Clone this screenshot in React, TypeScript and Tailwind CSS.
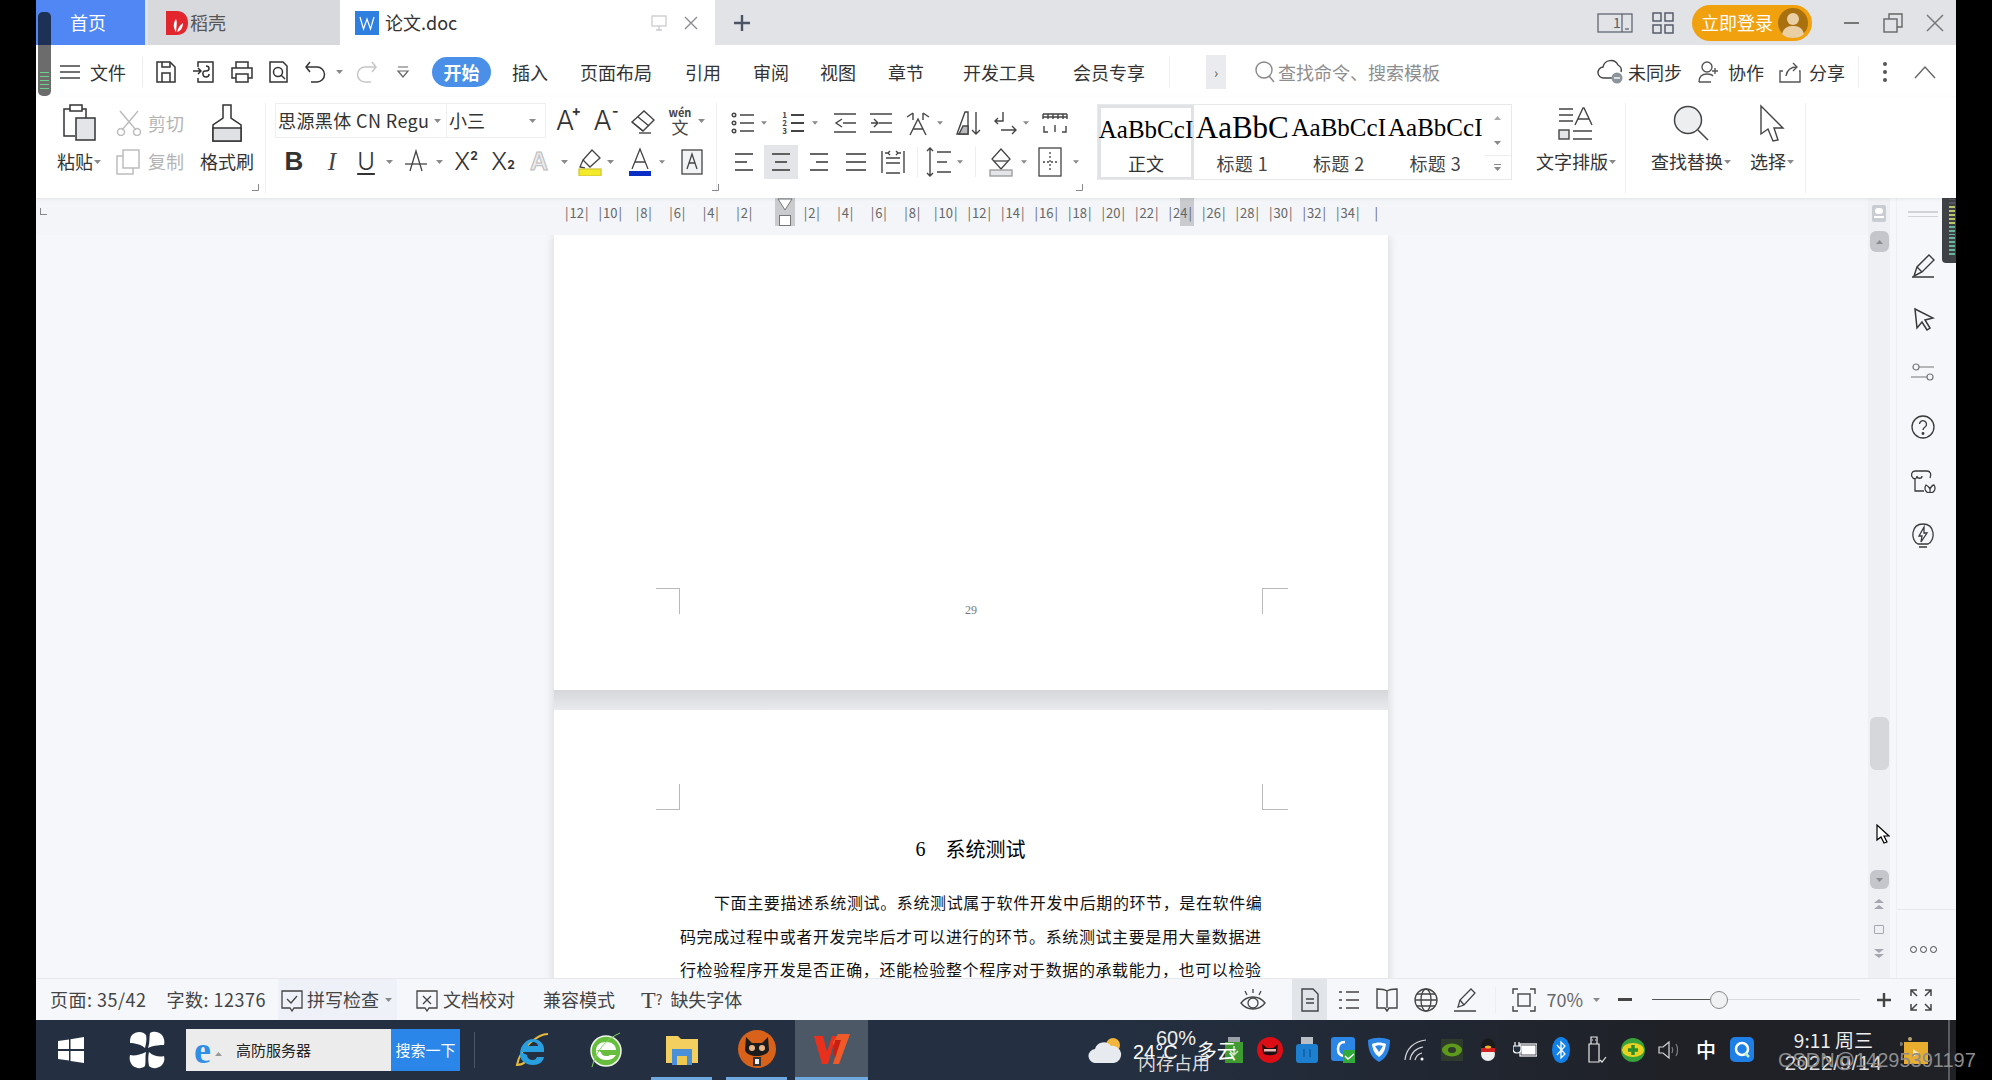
import React from "react";

type P = { w?: number; h?: number; children?: React.ReactNode; c?: string; sw?: number };
const S = ({ w = 24, h = 24, children, c = "#333", sw = 1.5 }: P) => (
  <svg width={w} height={h} viewBox={`0 0 ${w} ${h}`} fill="none" stroke={c} strokeWidth={sw}>
    {children}
  </svg>
);
const Caret = ({ c = "#8a8a8a" }: { c?: string }) => (
  <svg width="7" height="4" viewBox="0 0 7 4"><path d="M0 0h7L3.5 4z" fill={c} /></svg>
);
const Launcher = () => (
  <svg width="7" height="7" viewBox="0 0 7 7" fill="none" stroke="#888"><path d="M6.5 0v6.5H0" /></svg>
);
const Cell = ({ className = "", children }: { className?: string; children?: React.ReactNode }) => (
  <div className={`flex items-center justify-center shrink-0 ${className}`}>{children}</div>
);
const Lines = ({ rows }: { rows: [number, number][] }) => (
  <S w={24} h={24}>
    {rows.map(([a, b], i) => (
      <path key={i} d={`M${a} ${4 + i * (16 / (rows.length - 1))}H${b}`} />
    ))}
  </S>
);
const VSep = ({ className = "" }: { className?: string }) => <div className={`w-px shrink-0 bg-[#eceef1] ${className}`} />;

function TopBar() {
  return (
    <div className="flex h-[45px] items-stretch bg-[#e1e3e6] text-[18px] text-[#333]">
      <div className="flex w-[109px] items-center bg-[#5087f4] pl-[34px] text-white">首页</div>
      <div className="ml-[3px] flex w-[192px] items-center bg-[#d8d9dc] pl-[17px] text-[#555]">
        <svg width="24" height="28" viewBox="0 0 24 28">
          <path d="M1 2h11c7 0 11 5 11 12s-4 12-11 12H1z" fill="#e3262e" />
          <path d="M11 23c-3-4-3-9 0-13 1 3 1 3 0 13zm1 0c1-4 3-7 6-9 0 4-2 8-6 9z" fill="#fff" />
        </svg>
        <span className="ml-[1px]">稻壳</span>
      </div>
      <div className="flex w-[375px] items-center bg-white pl-[15px]">
        <svg width="24" height="24" viewBox="0 0 24 24">
          <rect width="24" height="24" fill="#2f7fe0" />
          <path d="M5 6l3.500 12L12 8l3.500 10L19 6" fill="none" stroke="#fff" strokeWidth="1.200" />
        </svg>
        <span className="ml-[6px]">论文.doc</span>
        <div className="ml-[193px]">
          <S w={18} h={18} c="#c9cbce" sw={1.3}><rect x="2" y="2" width="14" height="10" /><path d="M9 12v4M6 16h6" /></S>
        </div>
        <div className="ml-[15px]">
          <S w={16} h={16} c="#8a8c90" sw={1.4}><path d="M2 2l12 12M14 2L2 14" /></S>
        </div>
      </div>
      <Cell className="ml-[16px] w-[22px]">
        <S w={20} h={20} c="#4c5566" sw={2.4}><path d="M10 2v16M2 10h16" /></S>
      </Cell>
      <div className="flex-1" />
      <div className="flex w-[36px] items-center">
        <S w={36} h={24} c="#555c6b" sw={1.2}><rect x="1" y="3" width="34" height="18" /><path d="M25 3v18" /><path d="M28 18h4" /></S>
      </div>
      <div className="relative -ml-[20px] flex w-[14px] items-center text-[14px] text-[#555c6b]">1</div>
      <Cell className="ml-[25px] w-[22px]">
        <S w={22} h={22} c="#555c6b" sw={1.5}><rect x="1" y="1" width="8" height="8" /><rect x="13" y="1" width="8" height="8" /><rect x="1" y="13" width="8" height="8" /><rect x="13" y="13" width="8" height="8" /></S>
      </Cell>
      <div className="ml-[18px] flex items-center">
        <div className="flex h-[36px] w-[120px] items-center rounded-[18px] bg-[#f1a10e] pl-[9px] text-white">
          <span>立即登录</span>
          <svg className="ml-[5px]" width="30" height="30" viewBox="0 0 30 30">
            <circle cx="15" cy="15" r="15" fill="#a9700f" />
            <circle cx="15" cy="11" r="6" fill="#e9cfa3" />
            <path d="M4 26c2-7 6-8 11-8s9 1 11 8c-3 3-7 4-11 4s-8-1-11-4z" fill="#e9cfa3" />
          </svg>
        </div>
      </div>
      <Cell className="ml-[26px] w-[26px]"><div className="h-[2px] w-[15px] bg-[#777]" /></Cell>
      <Cell className="ml-[16px] w-[26px]">
        <S w={20} h={20} c="#666" sw={1.4}><rect x="1" y="6" width="13" height="13" /><path d="M6 6V1h13v13h-5" /></S>
      </Cell>
      <Cell className="ml-[16px] w-[26px]">
        <S w={18} h={18} c="#777" sw={1.5}><path d="M1 1l16 16M17 1L1 17" /></S>
      </Cell>
      <div className="w-[8px]" />
    </div>
  );
}

const MenuTab = ({ className = "", children }: { className?: string; children: React.ReactNode }) => (
  <span className={`shrink-0 text-[18px] text-[#333] ${className}`}>{children}</span>
);

function MenuBar() {
  return (
    <div className="flex h-[52px] items-center bg-white pt-[2px]">
      <div className="ml-[24px]">
        <S w={20} h={20} c="#444"><path d="M0 4h20M0 10h20M0 16h20" /></S>
      </div>
      <MenuTab className="ml-[10px]">文件</MenuTab>
      <VSep className="ml-[16px] h-[30px]" />
      <Cell className="ml-[4px] w-[38px]">
        <S><path d="M3 2h13l5 5v15H3z" /><path d="M8 2v5h8V2M8 22v-9h8v9" /></S>
      </Cell>
      <Cell className="w-[38px]">
        <S><path d="M6 7V2h15v20H6v-4" /><path d="M1 11h7M6 8l3 3-3 3" /><path d="M14 6c4 0 4 5 0 5h-1c-3 0-3 6 1 6 2 0 3-1 3-3" /></S>
      </Cell>
      <Cell className="w-[37px]">
        <S><path d="M6 8V2h12v6M6 18H2V8h20v10h-4" /><rect x="6" y="14" width="12" height="8" /></S>
      </Cell>
      <Cell className="w-[38px]">
        <S><path d="M3 2h13l4 4v16H3z" /><circle cx="11" cy="12" r="4.500" /><path d="M14 15l4 4" /></S>
      </Cell>
      <Cell className="w-[35px]">
        <S><path d="M6 2L2 7l4 5" /><path d="M2 7h11a7 7 0 0 1 0 15H7" /></S>
      </Cell>
      <Cell className="w-[13px]"><Caret /></Cell>
      <Cell className="ml-[1px] w-[37px]">
        <S c="#c4c6c9"><path d="M18 2l4 5-4 5" /><path d="M22 7H11a7 7 0 0 0 0 15h6" /></S>
      </Cell>
      <Cell className="w-[37px]">
        <S w={14} h={14} c="#666" sw={1.2}><path d="M2 2h10M2 6l5 6 5-6z" /></S>
      </Cell>
      <div className="ml-[11px] flex h-[30px] w-[59px] shrink-0 items-center justify-center rounded-[15px] bg-[#4a8fe8] text-[18px] font-bold text-white">开始</div>
      <MenuTab className="ml-[21px]">插入</MenuTab>
      <MenuTab className="ml-[32px]">页面布局</MenuTab>
      <MenuTab className="ml-[33px]">引用</MenuTab>
      <MenuTab className="ml-[32px]">审阅</MenuTab>
      <MenuTab className="ml-[31px]">视图</MenuTab>
      <MenuTab className="ml-[32px]">章节</MenuTab>
      <MenuTab className="ml-[39px]">开发工具</MenuTab>
      <MenuTab className="ml-[38px]">会员专享</MenuTab>
      <VSep className="ml-[24px] h-[32px]" />
      <div className="ml-[36px] flex h-[34px] w-[20px] items-center justify-center bg-[#e9ebee] text-[14px] text-[#555]">›</div>
      <div className="ml-[28px]">
        <S w={22} h={24} c="#888" sw={1.4}><circle cx="10" cy="10" r="8" /><path d="M15 16l5 6" /></S>
      </div>
      <span className="ml-[2px] w-[170px] shrink-0 text-[18px] text-[#8e8e8e]">查找命令、搜索模板</span>
      <div className="ml-[149px]">
        <svg width="28" height="26" viewBox="0 0 28 26" fill="none" stroke="#444" strokeWidth="1.400">
          <path d="M20 19H7a5.500 5.500 0 0 1-1-11 8 8 0 0 1 15-2 6 6 0 0 1 3 7" />
          <circle cx="20" cy="19" r="5.500" fill="#8d949c" stroke="none" />
          <path d="M17 19h6" stroke="#fff" />
        </svg>
      </div>
      <MenuTab className="ml-[3px]">未同步</MenuTab>
      <div className="ml-[15px]">
        <S w={22} h={24} c="#555" sw={1.4}><circle cx="10" cy="7" r="5" /><path d="M2 22c0-6 3-8 8-8 3 0 5 .6 6 2M2 22h12M18 8v6M15 11h6" /></S>
      </div>
      <MenuTab className="ml-[9px]">协作</MenuTab>
      <div className="ml-[14px]">
        <S w={24} h={24} c="#555" sw={1.4}><path d="M5 11H2v11h20V11h-1" /><path d="M8 16c1-6 5-9 11-9" /><path d="M15 3l4 4-4 4" /></S>
      </div>
      <MenuTab className="ml-[7px]">分享</MenuTab>
      <VSep className="ml-[13px] h-[32px]" />
      <div className="ml-[24px] flex flex-col gap-[4px]">
        <div className="h-[4px] w-[4px] rounded-full bg-[#555]" />
        <div className="h-[4px] w-[4px] rounded-full bg-[#555]" />
        <div className="h-[4px] w-[4px] rounded-full bg-[#555]" />
      </div>
      <div className="ml-[27px]">
        <S w={22} h={14} c="#666" sw={1.4}><path d="M1 13L11 2l10 11" /></S>
      </div>
    </div>
  );
}

const AIcon = ({ sup }: { sup?: string }) => (
  <span className="relative font-['Inter'] text-[27px] font-light leading-none text-[#333]">
    A{sup && <span className="absolute -right-[7px] -top-[3px] text-[14px] font-bold">{sup}</span>}
  </span>
);

function Ribbon() {
  const styles = [
    { t: "标题 1", s: "AaBbC", cls: "text-[31px]" },
    { t: "标题 2", s: "AaBbCcI", cls: "text-[25px]" },
    { t: "标题 3", s: "AaBbCcI", cls: "text-[25px]" },
  ];
  return (
    <div className="relative z-10 flex h-[101px] items-start bg-white pt-[6px] text-[18px] text-[#333] shadow-[0_1px_3px_rgba(0,0,0,0.08)]">
      {/* clipboard */}
      <div className="relative flex h-[95px] w-[229px] shrink-0">
        <div className="ml-[19px] flex w-[48px] flex-col items-center">
          <div className="flex h-[40px] items-center">
            <svg width="34" height="38" viewBox="0 0 34 38" fill="none" stroke="#333" strokeWidth="1.500">
              <path d="M13 32H2V5h22v9" /><rect x="8" y="1" width="12" height="6" fill="#fff" />
              <rect x="14" y="14" width="19" height="22" fill="#e3e5e8" />
            </svg>
          </div>
          <div className="flex h-[37px] items-center whitespace-nowrap">粘贴<span className="ml-[1px]"><Caret /></span></div>
        </div>
        <div className="ml-[13px] flex w-[78px] flex-col">
          <div className="flex h-[40px] items-center text-[#b4b4b4]">
            <S w={26} h={26} c="#bdbdbd"><path d="M4 1l16 19M22 1L6 20" /><circle cx="5" cy="22" r="3.500" /><circle cx="21" cy="22" r="3.500" /></S>
            <span className="ml-[6px]">剪切</span>
          </div>
          <div className="flex h-[37px] items-center text-[#b4b4b4]">
            <S w={24} h={26} c="#bdbdbd"><rect x="7" y="1" width="16" height="18" /><path d="M7 7H1v18h16v-6" /></S>
            <span className="ml-[8px]">复制</span>
          </div>
        </div>
        <div className="ml-[3px] flex w-[60px] flex-col items-center">
          <div className="flex h-[40px] items-center">
            <svg width="30" height="38" viewBox="0 0 30 38" fill="none" stroke="#333" strokeWidth="1.500">
              <path d="M11 1h8v13l10 7v16H1V21l10-7z" /><path d="M1 24h28v13H1z" fill="#dfe1e4" />
            </svg>
          </div>
          <div className="flex h-[37px] items-center whitespace-nowrap">格式刷</div>
        </div>
        <div className="absolute bottom-[7px] right-[6px]"><Launcher /></div>
      </div>
      <VSep className="h-[90px]" />
      {/* font */}
      <div className="relative h-[95px] w-[450px] shrink-0 pl-[6px]">
        <div className="flex h-[40px] items-start">
          <div className="ml-[3px] flex h-[35px] w-[271px] shrink-0 border border-[#eceef0]">
            <div className="flex w-[171px] items-center overflow-hidden border-r border-[#eceef0] pl-[2px]">
              <span className="whitespace-nowrap text-[18px] tracking-[0.4px]">思源黑体 CN Regu</span>
              <span className="ml-[5px]"><Caret /></span>
            </div>
            <div className="flex flex-1 items-center pl-[2px]">小三<span className="ml-[44px]"><Caret /></span></div>
          </div>
          <Cell className="ml-[1px] h-[35px] w-[36px]"><AIcon sup="+" /></Cell>
          <Cell className="ml-[1px] h-[35px] w-[37px]"><AIcon sup="-" /></Cell>
          <Cell className="ml-[3px] h-[35px] w-[37px]">
            <S w={26} h={26} c="#444" sw={1.4}><path d="M2 14L14 3l10 9-11 11z" /><path d="M2 14l11 9M8 9l11 9" /><path d="M9 25h12" /></S>
          </Cell>
          <div className="ml-[5px] flex h-[35px] w-[28px] flex-col items-center justify-center leading-none">
            <span className="text-[11px] font-bold text-[#444]">wén</span>
            <span className="text-[17px] text-[#444]">文</span>
          </div>
          <Cell className="ml-[2px] h-[35px] w-[10px]"><Caret /></Cell>
        </div>
        <div className="flex h-[37px] items-center">
          <Cell className="w-[44px] font-['Liberation_Sans'] text-[26px] font-bold text-[#333]">B</Cell>
          <Cell className="w-[32px] font-['Liberation_Serif'] text-[25px] italic text-[#444]">I</Cell>
          <Cell className="w-[36px] font-['Inter'] text-[24px] font-light underline underline-offset-[3px]">U</Cell>
          <Cell className="w-[10px]"><Caret /></Cell>
          <Cell className="ml-[3px] w-[38px]">
            <S w={26} h={26} c="#444" sw={1.3}><path d="M7 22L13 2l6 20" /><path d="M2 15h22" /></S>
          </Cell>
          <Cell className="w-[8px]"><Caret /></Cell>
          <Cell className="ml-[4px] w-[38px] font-['Inter'] text-[24px] font-light">X<sup className="text-[12px] font-bold">2</sup></Cell>
          <Cell className="w-[36px] font-['Inter'] text-[24px] font-light">X<sub className="text-[12px] font-bold">2</sub></Cell>
          <Cell className="w-[36px] font-['Liberation_Sans'] text-[25px] font-bold text-[#e9eaec] [-webkit-text-stroke:1px_#bbb]">A</Cell>
          <Cell className="ml-[2px] w-[10px]"><Caret /></Cell>
          <Cell className="ml-[6px] w-[30px]">
            <svg width="26" height="28" viewBox="0 0 26 28" fill="none" stroke="#444" strokeWidth="1.300">
              <path d="M15 2l8 8-10 9-7-7z" /><path d="M6 12l-3 7 5 1" />
              <rect x="2" y="21" width="22" height="7" fill="#f4ea2a" stroke="#cfc73d" />
            </svg>
          </Cell>
          <Cell className="w-[10px]"><Caret /></Cell>
          <Cell className="ml-[6px] w-[38px]">
            <svg width="24" height="30" viewBox="0 0 24 30" fill="none" stroke="#444" strokeWidth="1.300">
              <path d="M4 22L12 2l8 20M7 15h10" /><rect x="1" y="24" width="22" height="5" fill="#0b2fc4" stroke="none" />
            </svg>
          </Cell>
          <Cell className="w-[6px]"><Caret /></Cell>
          <Cell className="ml-[6px] w-[42px]">
            <S w={22} h={26} c="#444" sw={1.3}><rect x="1" y="1" width="20" height="24" fill="#f2f3f4" /><path d="M6 20l5-15 5 15M8 14h6" /></S>
          </Cell>
        </div>
        <div className="absolute bottom-[7px] right-[-3px]"><Launcher /></div>
      </div>
      <VSep className="h-[90px]" />
      {/* paragraph */}
      <div className="relative h-[95px] w-[365px] shrink-0">
        <div className="flex h-[40px] items-center pl-[8px]">
          <Cell className="w-[36px]">
            <S w={24} h={24} c="#444" sw={1.4}><circle cx="3" cy="4" r="1.800" /><circle cx="3" cy="12" r="1.800" /><circle cx="3" cy="20" r="1.800" /><path d="M9 4h14M9 12h14M9 20h14" /></S>
          </Cell>
          <Cell className="w-[6px]"><Caret /></Cell>
          <Cell className="ml-[7px] w-[38px] text-[#444]">
            <div className="flex">
              <div className="flex flex-col text-[8px] font-bold leading-[8px]"><span>1</span><span>2</span><span>3</span></div>
              <div className="ml-[4px] flex flex-col gap-[6px] pt-[3px]"><div className="h-[2px] w-[13px] bg-[#444]" /><div className="h-[2px] w-[13px] bg-[#444]" /><div className="h-[2px] w-[13px] bg-[#444]" /></div>
            </div>
          </Cell>
          <Cell className="w-[6px]"><Caret /></Cell>
          <Cell className="ml-[8px] w-[37px]">
            <S w={26} h={24} c="#444" sw={1.4}><path d="M2 3h22M11 12h13M2 21h22M10 8l-6 4 6 4" /></S>
          </Cell>
          <Cell className="w-[36px]">
            <S w={26} h={24} c="#444" sw={1.4}><path d="M2 3h22M11 12h13M2 21h22M3 12h6M6 8l4 4-4 4" /></S>
          </Cell>
          <Cell className="w-[38px]">
            <S w={28} h={26} c="#444" sw={1.4}><path d="M6 25L14 9l8 16M9 19h10M3 7l6-4M9 3v7M25 7l-6-4M19 3v7" /></S>
          </Cell>
          <Cell className="w-[6px]"><Caret /></Cell>
          <Cell className="ml-[7px] w-[36px]">
            <S w={26} h={26} c="#444" sw={1.4}><path d="M2 24L10 2h3v22z" /><path d="M4 24l4-8h5v8z" fill="#b8babd" /><path d="M21 2v22M17 20l4 4 4-4" /></S>
          </Cell>
          <Cell className="ml-[1px] w-[36px]">
            <S w={24} h={26} c="#444" sw={1.4}><path d="M10 2v9H2M5 8l-3 3 3 3M8 20h15M19 16l4 4-4 4" /></S>
          </Cell>
          <Cell className="w-[6px]"><Caret /></Cell>
          <Cell className="ml-[1px] w-[50px]">
            <S w={26} h={22} c="#444" sw={1.4}><path d="M1 2h24M1 5h24M1 2v5M6 2v5M11 2v5M16 2v5M21 2v5M25 2v5M2 14v6h4M24 14v6h-4M13 13v7" /></S>
          </Cell>
        </div>
        <div className="flex h-[37px] items-center pl-[9px]">
          <Cell className="w-[36px]"><Lines rows={[[3, 21], [3, 15], [3, 21]]} /></Cell>
          <Cell className="ml-[2px] h-[34px] w-[34px] bg-[#e3e5e8]"><Lines rows={[[3, 21], [6, 18], [3, 21]]} /></Cell>
          <Cell className="ml-[2px] w-[37px]"><Lines rows={[[3, 21], [9, 21], [3, 21]]} /></Cell>
          <Cell className="w-[37px]"><Lines rows={[[2, 22], [2, 22], [2, 22]]} /></Cell>
          <Cell className="w-[37px]">
            <S w={26} h={26} c="#444" sw={1.4}><path d="M2 2v22M24 2v22M6 24h14M6 14h14M6 9h14M9 4H5M17 4h4M10 2l-2 2 2 2M16 2l2 2-2 2" /></S>
          </Cell>
          <VSep className="ml-[6px] h-[30px]" />
          <Cell className="ml-[3px] w-[36px]">
            <S w={26} h={30} c="#444" sw={1.4}><path d="M4 1v28M1 4l3-3 3 3M1 26l3 3 3-3M11 5h14M11 15h10M11 25h14" /></S>
          </Cell>
          <Cell className="w-[6px]"><Caret /></Cell>
          <VSep className="ml-[12px] h-[30px]" />
          <Cell className="ml-[5px] w-[40px]">
            <svg width="26" height="30" viewBox="0 0 26 30" fill="none" stroke="#444" strokeWidth="1.300">
              <path d="M13 2l9 10-9 10-9-10z" /><path d="M6 14h14" /><rect x="2" y="23" width="22" height="6" fill="#e3e5e8" stroke="#999" />
            </svg>
          </Cell>
          <Cell className="w-[6px]"><Caret /></Cell>
          <Cell className="w-[46px]">
            <S w={24} h={30} c="#444" sw={1.3}><rect x="1" y="1" width="22" height="28" /><path d="M12 5v20M5 15h14" strokeDasharray="2 2" /></S>
          </Cell>
          <Cell className="w-[6px]"><Caret /></Cell>
        </div>
        <div className="absolute bottom-[7px] right-[-1px]"><Launcher /></div>
      </div>
      {/* styles */}
      <div className="ml-[15px] mt-[1px] flex h-[76px] w-[415px] shrink-0 border border-[#e6e8ea]">
        <div className="flex h-full w-[96px] shrink-0 flex-col items-center border-[3px] border-b-[2px] border-[#e0e2e5]">
          <div className="flex h-[43px] items-center whitespace-nowrap font-['Liberation_Serif'] text-[25px] text-black">AaBbCcI</div>
          <div className="leading-[24px]">正文</div>
        </div>
        {styles.map((s) => (
          <div key={s.t} className="flex w-[96.500px] shrink-0 flex-col items-center">
            <div className={`flex h-[46px] items-center whitespace-nowrap font-['Liberation_Serif'] text-black ${s.cls}`}>{s.s}</div>
            <div className="leading-[24px] tracking-[0.4px] text-[#444]">{s.t}</div>
          </div>
        ))}
        <div className="flex flex-1 flex-col items-center text-[#999]">
          <div className="flex h-[25px] items-center"><span className="rotate-180"><Caret c="#aaa" /></span></div>
          <div className="flex h-[25px] items-center"><Caret c="#888" /></div>
          <div className="flex h-[24px] w-full flex-col items-center justify-center gap-[2px] border-t border-[#eee]"><div className="h-px w-[7px] bg-[#888]" /><Caret c="#888" /></div>
        </div>
      </div>
      {/* right buttons */}
      <div className="ml-[21px] flex w-[86px] shrink-0 flex-col items-center">
        <div className="flex h-[40px] items-center pt-[2px]">
          <S w={36} h={34} c="#444" sw={1.4}>
            <path d="M1 2h14M1 8h14M1 14h14M17 18L25 1h1l8 17M20 12h11" />
            <rect x="1" y="23" width="10" height="9" fill="#e3e5e8" /><path d="M15 24h19M15 32h19" />
          </S>
        </div>
        <div className="flex h-[37px] items-center whitespace-nowrap">文字排版<span className="ml-[1px]"><Caret /></span></div>
      </div>
      <VSep className="ml-[6px] h-[90px]" />
      <div className="ml-[21px] flex w-[88px] shrink-0 flex-col items-center">
        <div className="flex h-[40px] items-center">
          <svg width="36" height="36" viewBox="0 0 36 36" fill="none" stroke="#444" strokeWidth="1.500">
            <circle cx="15" cy="15" r="13.500" fill="#eceef0" /><path d="M25 25l10 10" />
          </svg>
        </div>
        <div className="flex h-[37px] items-center whitespace-nowrap">查找替换<span className="ml-[1px]"><Caret /></span></div>
      </div>
      <div className="ml-[9px] flex w-[56px] shrink-0 flex-col items-center">
        <div className="flex h-[40px] items-center">
          <S w={26} h={38} c="#444" sw={1.4}><path d="M2 2l22 22-9 0 4 12-5 1-5-12-7 5z" /></S>
        </div>
        <div className="flex h-[37px] items-center whitespace-nowrap">选择<span className="ml-[1px]"><Caret /></span></div>
      </div>
      <VSep className="ml-[5px] h-[90px]" />
    </div>
  );
}

function Ruler() {
  const left = [12, 10, 8, 6, 4, 2];
  const right = [2, 4, 6, 8, 10, 12, 14, 16, 18, 20, 22, 24, 26, 28, 30, 32, 34];
  return (
    <div className="flex h-[37px] shrink-0 bg-[#f3f5f8]">
      <div className="ml-[4px] mt-[10px] h-[7px] w-[7px] border-b border-l border-[#888]" />
      <div className="ml-[513px] flex h-[28px] items-center text-[13px] leading-none text-[#666]">
        {left.map((n) => (
          <div key={n} className="flex w-[33.500px] justify-center gap-[1px] pt-[1px]"><span>|</span>{n}<span>|</span></div>
        ))}
        <div className="relative ml-[14px] flex h-[28px] w-[20px] justify-center bg-[#c9cbcf]">
          <div className="absolute left-[2px] top-0"><svg width="16" height="14" viewBox="0 0 16 14"><path d="M1 1h14L8 12z" fill="#fff" stroke="#777" /></svg></div>
          <div className="absolute left-[4px] top-[17px] h-[11px] w-[12px] border border-[#777] bg-white" />
        </div>
        {right.map((n) => (
          <div key={n} className={`relative flex w-[33.500px] justify-center gap-[1px] pt-[1px] ${n === 24 ? "h-[28px] items-center bg-[linear-gradient(90deg,transparent_50%,#c9cbcf_50%,#c9cbcf_90%,transparent_90%)]" : ""}`}><span>|</span>{n}<span>|</span></div>
        ))}
        <div className="ml-[10px]">|</div>
      </div>
    </div>
  );
}

function Pages() {
  return (
    <div className="min-h-0 flex-1 overflow-hidden bg-[#f5f7fb] pl-[518px]">
      <div className="w-[834px] shadow-[0_0_10px_rgba(0,0,0,0.14)]">
        <div className="h-[455px] bg-white px-[102px] pr-[100px] pt-[353px]">
          <div className="flex justify-between">
            <div className="h-[26px] w-[24px] border-r border-t border-[#b9b9b9]" />
            <span className="mt-[13px] font-['Liberation_Serif'] text-[12px] text-[#777]">29</span>
            <div className="h-[26px] w-[26px] border-l border-t border-[#b9b9b9]" />
          </div>
        </div>
        <div className="h-[20px] bg-[linear-gradient(180deg,#d5d7db,#e8eaed)]" />
        <div className="h-[400px] bg-white px-[102px] pr-[100px] pt-[74px]">
          <div className="flex justify-between">
            <div className="h-[26px] w-[24px] border-b border-r border-[#b9b9b9]" />
            <div className="h-[26px] w-[26px] border-b border-l border-[#b9b9b9]" />
          </div>
          <div className="mt-[24px] flex h-[30px] items-center justify-center pr-[3px] text-[20px] text-black">
            <span className="font-['Liberation_Serif']">6</span><span className="ml-[20px]">系统测试</span>
          </div>
          <div className="ml-[24px] mt-[22px] w-[582px] whitespace-nowrap text-[16px] leading-[33.500px] tracking-[0.62px] text-[#111]">
            <div className="pl-[34px]">下面主要描述系统测试。系统测试属于软件开发中后期的环节，是在软件编</div>
            <div>码完成过程中或者开发完毕后才可以进行的环节。系统测试主要是用大量数据进</div>
            <div>行检验程序开发是否正确，还能检验整个程序对于数据的承载能力，也可以检验</div>
          </div>
        </div>
      </div>
    </div>
  );
}

function Scrollbar() {
  const Chev = ({ up }: { up?: boolean }) => (
    <svg width="12" height="12" viewBox="0 0 12 12" fill={"#a4a7ad"}>
      {up ? <path d="M6 0l5 4H1zM6 6l5 4H1z" /> : <path d="M1 2h10L6 6zM1 7h10l-5 4z" />}
    </svg>
  );
  return (
    <div className="flex w-[22px] shrink-0 flex-col items-center bg-[#eef0f4]">
      <div className="mt-[7px] flex h-[17px] w-[14px] flex-col items-center rounded-[2px] bg-[#c9ccd1]">
        <div className="mt-[3px] h-[6px] w-[8px] rounded-full bg-white" />
        <div className="mt-[2px] h-[2px] w-[10px] bg-white" />
      </div>
      <div className="mt-[9px] flex h-[21px] w-[19px] items-center justify-center rounded-[6px] bg-[#c4c6cb]"><span className="rotate-180"><Caret c="#8a8c90" /></span></div>
      <div className="mt-[465px] h-[53px] w-[19px] rounded-[6px] bg-[#d6d7db]" />
      <div className="mt-[100px] flex h-[19px] w-[19px] items-center justify-center rounded-[6px] bg-[#c4c6cb]"><Caret c="#8a8c90" /></div>
      <div className="mt-[10px]"><Chev up /></div>
      <div className="mt-[14px] h-[9px] w-[10px] rounded-[1px] border border-[#a4a7ad]" />
      <div className="mt-[13px]"><Chev /></div>
    </div>
  );
}

function SideBar() {
  const ic = "#3a3a3a";
  return (
    <div className="flex w-[66px] shrink-0 bg-[#f5f7fb] pl-[6px]">
      <div className="flex w-[60px] flex-col border-l border-[#eef0f4]">
        <div className="flex flex-1 flex-col items-center pr-[8px]">
          <div className="mt-[13px] flex flex-col gap-[3px]">
            <div className="h-[1.500px] w-[30px] bg-[#d0d2d6]" />
            <div className="h-[1.500px] w-[30px] bg-[#d0d2d6]" />
          </div>
          <div className="mt-[36px]">
            <S w={26} h={26} c={ic} sw={1.4}><path d="M4 23l3-9L19 2l5 5-12 12z" /><path d="M7 14l5 5M2 24h22" /></S>
          </div>
          <div className="mt-[28px]">
            <S w={24} h={24} c={ic} sw={1.5}><path d="M4 2l18 9-8 2 5 8-3 2-5-8-5 6z" /></S>
          </div>
          <div className="mt-[31px]">
            <S w={26} h={20} c="#777" sw={1.2}><circle cx="6" cy="5" r="3" fill="#f5f7fb" /><path d="M9 5h15M1 15h16" /><circle cx="20" cy="15" r="3" fill="#f5f7fb" /></S>
          </div>
          <div className="mt-[33px]">
            <svg width="24" height="24" viewBox="0 0 24 24" fill="none" stroke={ic} strokeWidth="1.300">
              <circle cx="12" cy="12" r="11" /><path d="M8.500 9a3.500 3.500 0 1 1 5.500 3c-1.500 1-2 1.500-2 3" /><circle cx="12" cy="18.500" r=".8" fill={ic} />
            </svg>
          </div>
          <div className="mt-[30px]">
            <S w={26} h={24} c={ic} sw={1.3}>
              <path d="M5 9V22h9M3 9c-3-3-1-7 2-7h12c3 0 5 3 3 7M3 9c2 2 4 0 4-2 0 3 5 3 5 0" />
              <path d="M20 24c-5 0-6-5-4-8 2 1 3 2 4 4 1-2 2-4 4-4 2 3 1 8-4 8zM20 24v-6" />
            </S>
          </div>
          <div className="mt-[29px]">
            <S w={24} h={26} c={ic} sw={1.3}>
              <path d="M7 22c-8-4-7-20 5-20s13 16 5 20zM8 25h8" /><path d="M13 5l-5 9h3l-1 6 6-9h-3z" />
            </S>
          </div>
          <div className="flex-1" />
        </div>
        <div className="h-px w-full bg-[#e6e8ec]" />
        <div className="flex h-[68px] items-center justify-center gap-[3px] pr-[6px] pt-[10px]">
          <div className="h-[7px] w-[7px] rounded-full border-[1.500px] border-[#444]" />
          <div className="h-[7px] w-[7px] rounded-full border-[1.500px] border-[#444]" />
          <div className="h-[7px] w-[7px] rounded-full border-[1.500px] border-[#444]" />
        </div>
      </div>
    </div>
  );
}

function StatusBar() {
  return (
    <div className="flex h-[42px] shrink-0 items-center border-t border-[#e6e8ec] bg-[#f5f7fb] text-[18px] text-[#444]">
      <span className="ml-[14px] tracking-[0.5px]">页面: 35/42</span>
      <span className="ml-[20px] tracking-[0.5px]">字数: 12376</span>
      <div className="ml-[12px] flex h-[42px] w-[119px] items-center bg-[#eef2f8] pl-[2px]">
        <S w={24} h={24} c="#444" sw={1.3}><path d="M2 3h20v17H14l-2 3-2-3H2z" /><path d="M7 11l4 4 6-7" /></S>
        <span className="ml-[3px]">拼写检查</span>
        <span className="ml-[6px]"><Caret /></span>
      </div>
      <div className="ml-[18px]">
        <S w={24} h={24} c="#444" sw={1.3}><path d="M2 3h20v17H14l-2 3-2-3H2z" /><path d="M8 8l8 8M16 8l-8 8" /></S>
      </div>
      <span className="ml-[4px]">文档校对</span>
      <span className="ml-[28px]">兼容模式</span>
      <span className="ml-[26px] font-['Liberation_Serif'] text-[24px] leading-none">T</span>
      <span className="text-[14px]">?</span>
      <span className="ml-[8px]">缺失字体</span>
      <div className="flex-1" />
      <Cell className="w-[36px]">
        <svg width="26" height="26" viewBox="0 0 26 26" fill="none" stroke="#444" strokeWidth="1.300">
          <path d="M1 16c6-8 18-8 24 0-6 8-18 8-24 0z" /><circle cx="13" cy="16" r="5" /><path d="M13 2v4M5 4l2 4M21 4l-2 4" />
        </svg>
      </Cell>
      <Cell className="ml-[21px] h-[42px] w-[35px] bg-[#e1e4e9]">
        <S w={20} h={24} c="#444" sw={1.4}><path d="M2 1h11l5 5v17H2z" /><path d="M6 11h8M6 15h8" /></S>
      </Cell>
      <Cell className="ml-[6px] w-[32px]">
        <S w={22} h={22} c="#444" sw={1.4}><path d="M1 3h3M8 3h13M1 11h3M8 11h13M1 19h3M8 19h13" /></S>
      </Cell>
      <Cell className="ml-[6px] w-[32px]">
        <S w={24} h={26} c="#444" sw={1.4}><path d="M12 4C9 2 5 2 2 2v19h8l2 3 2-3h8V2c-3 0-7 0-10 2zM12 4v17" /></S>
      </Cell>
      <Cell className="ml-[7px] w-[32px]">
        <S w={24} h={24} c="#444" sw={1.3}><circle cx="12" cy="12" r="11" /><ellipse cx="12" cy="12" rx="5" ry="11" /><path d="M1 12h22M3 6h18M3 18h18" /></S>
      </Cell>
      <Cell className="ml-[7px] w-[32px]">
        <S w={26} h={26} c="#444" sw={1.3}><path d="M6 20l2-7L19 2l4 4-11 12z" /><path d="M8 13l4 5M2 24h22" /></S>
      </Cell>
      <VSep className="ml-[14px] h-[26px]" />
      <Cell className="ml-[15px] w-[26px]">
        <S w={24} h={24} c="#444" sw={1.4}><path d="M1 6V1h5M18 1h5v5M23 18v5h-5M6 23H1v-5" /><rect x="6" y="6" width="12" height="12" /></S>
      </Cell>
      <span className="ml-[9px] text-[#666]">70%</span>
      <span className="ml-[10px]"><Caret /></span>
      <div className="ml-[18px] h-[3px] w-[14px] bg-[#444]" />
      <div className="ml-[20px] flex w-[208px] items-center">
        <div className="h-px w-[58px] bg-[#555]" />
        <div className="h-[18px] w-[18px] rounded-full border border-[#888] bg-[#f0f1f3]" />
        <div className="h-px flex-1 bg-[#d8dadd]" />
      </div>
      <div className="ml-[17px]"><S w={14} h={14} c="#444" sw={2.4}><path d="M7 0v14M0 7h14" /></S></div>
      <div className="ml-[19px]">
        <S w={22} h={22} c="#444" sw={1.5}><path d="M1 7V1h6M1 1l6 6M21 7V1h-6M21 1l-6 6M1 15v6h6M1 21l6-6M21 15v6h-6M21 21l-6-6" /></S>
      </div>
      <div className="w-[24px]" />
    </div>
  );
}

function Taskbar() {
  const tray: React.ReactNode[] = [
    <svg key="b" width="18" height="26" viewBox="0 0 18 26"><rect x="3" y="0" width="12" height="5" fill="#9aa0a6" /><rect x="0" y="5" width="18" height="21" fill="#3f9b31" /><path d="M9 9v9M5 14l4 4 4-4" stroke="#cfe9c6" fill="none" strokeWidth="1.500" /></svg>,
    <svg key="r" width="26" height="26" viewBox="0 0 26 26"><circle cx="13" cy="13" r="13" fill="#dc0d14" /><path d="M5 7l5 4h6l5-4-1 9c-2 3-12 3-14 0z" fill="#1d1010" /><rect x="7" y="12" width="12" height="2.500" fill="#e8b4b4" /></svg>,
    <svg key="u" width="22" height="26" viewBox="0 0 22 26"><rect x="5" y="0" width="12" height="8" fill="#b9bec5" /><rect x="0" y="7" width="22" height="19" rx="3" fill="#1d7fd0" /><path d="M8 12v8M14 12v8" stroke="#0c4d8c" /></svg>,
    <svg key="s1" width="24" height="26" viewBox="0 0 24 26"><rect width="24" height="24" rx="3" fill="#2b86e6" /><path d="M14 5c-5 0-7 3-7 7s2 7 7 7" stroke="#fff" fill="none" strokeWidth="2.500" /><rect x="12" y="13" width="12" height="13" fill="#32a93b" /><path d="M14 19l3 3 6-5" stroke="#fff" fill="none" strokeWidth="1.500" /></svg>,
    <svg key="s2" width="24" height="26" viewBox="0 0 24 26"><path d="M1 3c7-3 15-3 22 0 0 10-3 18-11 22C4 21 1 13 1 3z" fill="#2b86e6" /><path d="M5 7c5-2 9-2 14 0-1 7-3 10-7 13-4-3-6-6-7-13z" fill="#fff" /><path d="M8 9c3-1 5-1 8 0l-4 6z" fill="#2b86e6" /></svg>,
    <svg key="w" width="24" height="22" viewBox="0 0 24 22" fill="none" stroke="#d5d7da" strokeWidth="1.200"><path d="M1 21C2 10 10 2 22 1M6 21c1-7 6-12 13-13M11 21c1-4 3-6 7-7" /><circle cx="18" cy="20" r="1.500" fill="#fff" stroke="none" /></svg>,
    <svg key="n" width="22" height="22" viewBox="0 0 22 22"><rect width="22" height="22" fill="#2d3a2c" /><ellipse cx="11" cy="11" rx="10" ry="6.500" fill="#5d9a1c" /><ellipse cx="11" cy="11" rx="4" ry="3" fill="#2d3a2c" /></svg>,
    <svg key="q" width="20" height="24" viewBox="0 0 20 24"><ellipse cx="10" cy="9" rx="7" ry="9" fill="#1a1a1a" /><ellipse cx="10" cy="16" rx="7" ry="7" fill="#eee" /><rect x="3" y="10" width="14" height="4" fill="#d21f1f" /><ellipse cx="10" cy="9" rx="3" ry="1.500" fill="#f0b323" /></svg>,
    <svg key="p" width="24" height="18" viewBox="0 0 24 18" fill="none" stroke="#fff" strokeWidth="1.200"><rect x="7" y="3" width="17" height="12" /><rect x="9" y="5" width="13" height="8" fill="#fff" /><path d="M2 1v4M6 1v4M0 5h8v3c0 2-1 4-4 4s-4-2-4-4z" fill="#25303f" /></svg>,
    <svg key="bt" width="18" height="26" viewBox="0 0 18 26"><ellipse cx="9" cy="13" rx="9" ry="13" fill="#1180e8" /><path d="M5 8l8 9-4 4V5l4 4-8 9" fill="none" stroke="#fff" strokeWidth="1.300" /></svg>,
    <svg key="d" width="22" height="28" viewBox="0 0 22 28" fill="none" stroke="#e8e8e8" strokeWidth="1.200"><path d="M3 26V8h10v18zM5 8V1h6v7M6 4h1M9 4h1M14 24l2 2 4-5" /></svg>,
    <svg key="g" width="24" height="24" viewBox="0 0 24 24"><circle cx="12" cy="12" r="12" fill="#3aa23a" /><ellipse cx="12" cy="12" rx="11" ry="7" fill="#e9d21f" /><path d="M12 7v10M7 12h10" stroke="#2a8f2a" strokeWidth="3.500" /></svg>,
    <svg key="v" width="24" height="22" viewBox="0 0 24 22" fill="none" stroke="#d5d7da" strokeWidth="1.200"><path d="M1 8h4l6-5v16l-6-5H1z" /><path d="M14 8c1 2 1 4 0 6M18 5c2 3 2 9 0 12" stroke="#7c7f84" /></svg>,
    <span key="z" className="text-[20px] font-medium text-white">中</span>,
    <svg key="qq" width="24" height="26" viewBox="0 0 24 26"><rect width="24" height="25" rx="5" fill="#1e80e6" /><circle cx="12" cy="12" r="6" fill="none" stroke="#fff" strokeWidth="2.500" /><path d="M15 16l4 4" stroke="#bdf0d0" strokeWidth="2.500" /></svg>,
  ];
  return (
    <div className="relative flex h-[60px] shrink-0 items-center bg-[linear-gradient(90deg,#243042,#243042_55%,#1f2127_85%)] text-white">
      <div className="ml-[22px]">
        <svg width="26" height="26" viewBox="0 0 26 26" fill="#fff"><path d="M0 4l11-1.500V12H0zM12.500 2.300L26 0v12H12.500zM0 14h11v9.500L0 22zM12.500 14H26v12l-13.500-2z" /></svg>
      </div>
      <div className="ml-[45px]">
        <svg width="36" height="38" viewBox="0 0 36 38" fill="#fff">
          <path d="M3 4c4-4 11-4 14 0 1 4 0 9-1 13C10 12 2 12 1 12c0-3 0-6 2-8z" />
          <path d="M33 4c-4-4-9-4-12-2-1 5 0 10-2 15 6-3 13-3 16-3 1-4 0-7-2-10z" />
          <path d="M3 34c4 4 10 4 13 1 1-5 0-10 1-14-6 3-12 4-16 3-1 4 0 7 2 10z" />
          <path d="M33 34c-4 4-10 4-13 1-1-5-1-10 0-14 5 5 12 5 15 4 1 4 0 6-2 9z" />
        </svg>
      </div>
      <div className="ml-[21px] flex h-[42px] w-[274px] items-stretch">
        <div className="flex w-[205px] items-center bg-[#ececec] pl-[8px] text-[15px] text-[#222]">
          <span className="font-['Liberation_Serif'] text-[38px] font-bold leading-none text-[#2f8ee6]">e</span>
          <span className="ml-[4px]"><span className="inline-block rotate-180"><Caret c="#999" /></span></span>
          <span className="ml-[14px]">高防服务器</span>
        </div>
        <div className="flex flex-1 items-center justify-center bg-[#2a86e8] text-[15px]">搜索一下</div>
      </div>
      <div className="ml-[14px] h-[36px] w-px bg-[#4a5566]" />
      <div className="ml-[39px]">
        <svg width="38" height="38" viewBox="0 0 38 38" fill="none">
          <path d="M34 3c-10 0-28 14-31 31 5 0 8-3 8-3" stroke="#e5b93a" strokeWidth="2" />
          <path d="M7 21h23c1-9-5-13-11-13S6 14 6 23c0 7 6 11 13 11 6 0 10-3 11-8h-7c-1 2-2 3-4 3-3 0-6-2-6-5zm7-6c0-3 2-4 5-4s5 2 5 4z" fill="#2a9fe0" fillRule="evenodd" />
        </svg>
      </div>
      <div className="ml-[36px]">
        <svg width="36" height="38" viewBox="0 0 36 38">
          <circle cx="18" cy="20" r="15" fill="#66bd3e" stroke="#f2f7ee" strokeWidth="1.500" />
          <path d="M8 19h20c0-5-4-8-10-8s-10 3-10 9 5 9 10 9 8-2 10-5h-6c-1 1-2 1-4 1-3 0-5-2-5-4z" fill="#fff" />
          <path d="M4 36C8 20 18 8 32 2" stroke="#7ed957" fill="none" />
        </svg>
      </div>
      <div className="ml-[27px] flex h-[60px] w-[61px] items-center justify-center border-b-[3px] border-[#6ea8de]">
        <svg width="34" height="32" viewBox="0 0 34 32">
          <path d="M1 3h12l3 3h17v24H1z" fill="#f2cf5e" /><rect x="7" y="16" width="20" height="16" fill="#4a90d9" /><rect x="12" y="23" width="10" height="9" fill="#efc94f" />
        </svg>
      </div>
      <div className="ml-[14px] flex h-[60px] w-[61px] items-center justify-center border-b-[3px] border-[#6ea8de]">
        <svg width="38" height="38" viewBox="0 0 38 38">
          <circle cx="19" cy="19" r="19" fill="#d9621a" />
          <path d="M8 7l6 6h10l6-6 1 13c-2 8-22 8-24 0z" fill="#1c1c1c" />
          <circle cx="14" cy="18" r="3" fill="#e9b68a" /><circle cx="24" cy="18" r="3" fill="#e9b68a" />
          <rect x="15" y="27" width="8" height="9" fill="#333" /><rect x="17" y="29" width="4" height="5" fill="#eee" />
        </svg>
      </div>
      <div className="ml-[8px] flex h-[60px] w-[73px] items-center justify-center border-b-[3px] border-[#6ea8de] bg-[#4d5866]">
        <svg width="36" height="30" viewBox="0 0 36 30">
          <path d="M0 2h9l4 16 5-16h4L14 30H8z" fill="#e8301c" />
          <path d="M19 8l5-8h12l-11 30h-6l3-10z" fill="#f05a28" />
          <path d="M21 6h6l-6 18-2-8z" fill="#c71f14" />
        </svg>
      </div>
      {/* tray */}
      <div className="ml-[220px] flex h-[60px] w-[128px] shrink-0 items-center">
        <svg width="34" height="26" viewBox="0 0 34 26">
          <circle cx="25" cy="8" r="7" fill="#f0b53a" />
          <path d="M8 26a7 7 0 0 1-1-14 9 9 0 0 1 16-3 7 7 0 0 1 3 17z" fill="#e7eaee" />
        </svg>
        <div className="relative">
          <span className="absolute -top-[22px] left-[34px] whitespace-nowrap font-['Liberation_Sans'] text-[20px] leading-none text-[#eee]">60%</span>
          <span className="absolute -top-[9px] left-[11px] whitespace-nowrap text-[20px] leading-none text-white"><span className="font-['Liberation_Sans']">24°C</span><span className="ml-[19px]">多云</span></span>
          <span className="absolute top-[3px] left-[16px] whitespace-nowrap text-[18px] leading-none text-[#ddd]">内存占用</span>
        </div>
      </div>
      {tray.map((t, i) => (
        <Cell key={i} className="w-[36.300px]">{t}</Cell>
      ))}
      <div className="ml-[14px] flex w-[118px] shrink-0 flex-col items-center pt-[1px]">
        <span className="text-[19px] leading-[24px] text-[#eee]">9:11 周三</span>
        <span className="font-['Liberation_Sans'] text-[21px] leading-[22px] tracking-[0.5px] text-[#ddd]">2022/9/14</span>
      </div>
      <div className="ml-[8px]">
        <svg width="30" height="28" viewBox="0 0 30 28">
          <rect x="4" y="6" width="24" height="22" fill="#e8ad2f" /><path d="M13 13l6 4-6 4z" fill="#f6e6b8" /><circle cx="10" cy="3" r="2" fill="#b9a574" /><circle cx="1" cy="8" r="2" fill="#777" />
        </svg>
      </div>
      <div className="absolute right-[6px] top-0 h-[60px] w-[2px] bg-[#5a5c60]" />
    </div>
  );
}

export default function App() {
  return (
    <div className="relative flex h-[1080px] w-[1992px] justify-center overflow-hidden bg-black font-['Noto_Sans_CJK_SC','Noto_Sans',sans-serif]">
      <div className="flex h-[1080px] w-[1920px] flex-col">
        <TopBar />
        <MenuBar />
        <Ribbon />
        <div className="flex min-h-0 flex-1">
          <div className="flex min-w-0 flex-1 flex-col">
            <Ruler />
            <Pages />
          </div>
          <Scrollbar />
          <SideBar />
        </div>
        <StatusBar />
        <Taskbar />
      </div>
      {/* floating meters */}
      <div className="absolute left-[38px] top-[12px] flex h-[84px] w-[13px] flex-col overflow-hidden rounded-[5px] bg-[#6c6c6c]">
        <div className="h-[33px] bg-[#1d3157]" />
        <div className="mt-[27px] flex flex-col gap-[3px] px-[2px]">
          {[0, 1, 2, 3, 4].map((i) => <div key={i} className="h-px bg-[#6fd08a]" />)}
        </div>
      </div>
      <div className="absolute left-[1942px] top-[175px] flex h-[88px] w-[14px] flex-col items-end gap-[2px] overflow-hidden rounded-l-[4px] bg-[#3e4146] py-[8px] pr-[1px]">
        {Array.from({ length: 19 }).map((_, i) => (
          <div key={i} className={`h-[2px] w-[6px] ${i < 6 ? "bg-[#565a60]" : i < 11 ? "bg-[#b9c66a]" : "bg-[#67b59a]"}`} />
        ))}
      </div>
      <div className="absolute left-[1876px] top-[824px]">
        <svg width="14" height="20" viewBox="0 0 14 20"><path d="M1 1v15l4-3 3 6 3-1-3-6h5z" fill="#fff" stroke="#000" strokeWidth="1.200" /></svg>
      </div>
      <span className="absolute left-[1778px] top-[1048px] whitespace-nowrap font-['Liberation_Sans'] text-[20px] leading-[24px] text-[#8c8c8c]">CSDN@14295391197</span>
    </div>
  );
}
